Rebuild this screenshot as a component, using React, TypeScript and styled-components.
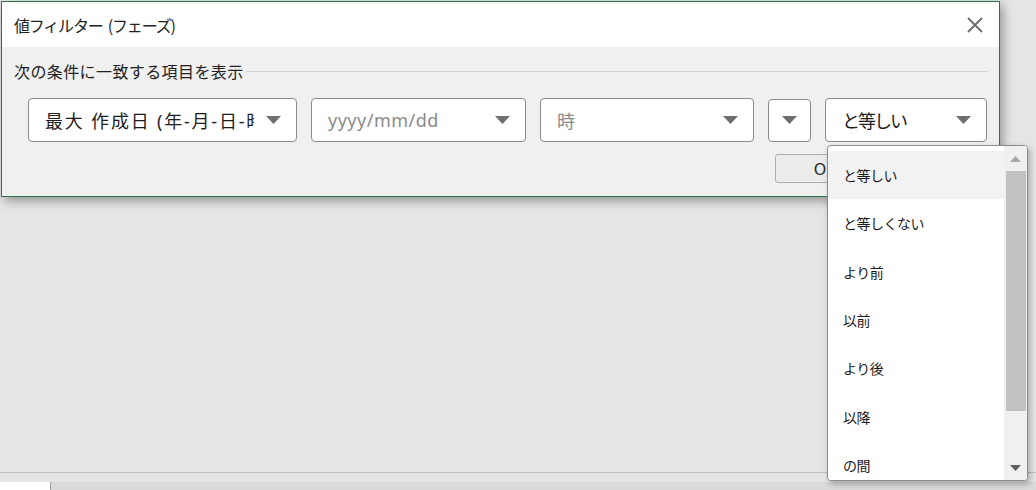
import React from "react";
import styled, { createGlobalStyle } from "styled-components";

const GlobalStyle = createGlobalStyle`
  html, body { margin: 0; padding: 0; }
  body {
    background: #e5e5e5;
    font-family: "Noto Sans", "Noto Sans CJK JP", sans-serif;
  }
  * { box-sizing: border-box; }
`;

const Page = styled.div`
  width: 1036px;
  height: 490px;
  overflow: hidden;
  display: flex;
  flex-direction: column;
  background: #e5e5e5;
`;

const Dialog = styled.div`
  margin: 1px 0 0 1px;
  width: 999px;
  height: 196px;
  flex: none;
  border: 1px solid #2a7547;
  background: #f0f0f0;
  box-shadow: 3px 4px 10px rgba(0, 0, 0, 0.35);
  display: flex;
  flex-direction: column;
  position: relative;
  z-index: 2;
`;

const TitleBar = styled.div`
  height: 45px;
  flex: none;
  background: #ffffff;
  display: flex;
  align-items: center;
  justify-content: space-between;
  padding: 0 14px 0 12px;
`;

const Title = styled.span`
  font-family: "Noto Sans CJK JP", sans-serif;
  font-size: 16px;
  letter-spacing: -1.2px;
  word-spacing: 3px;
  color: #222;
`;

const CloseButton = styled.button`
  width: 20px;
  height: 20px;
  padding: 0;
  border: none;
  background: none;
  display: flex;
  align-items: center;
  justify-content: center;
`;

const Body = styled.div`
  flex: 1;
  padding: 14px 11px 0 12px;
  display: flex;
  flex-direction: column;
`;

const Legend = styled.div`
  height: 20px;
  display: flex;
  align-items: center;
  gap: 2px;
  font-family: "Noto Sans CJK JP", sans-serif;
  font-size: 16px;
  letter-spacing: 0.4px;
  color: #222;
`;

const LegendRule = styled.div`
  flex: 1;
  height: 1px;
  background: #d3d3d3;
`;

const Controls = styled.div`
  margin-top: 17px;
  padding-left: 14px;
  display: flex;
  align-items: center;
  gap: 14px;
`;

const SelectBox = styled.div<{ $w: number; $compact?: boolean }>`
  position: relative;
  width: ${(p) => p.$w}px;
  height: ${(p) => (p.$compact ? 43 : 44)}px;
  flex: none;
  border: 1px solid #8a8a8a;
  border-radius: 4px;
  background: #ffffff;
  display: flex;
  align-items: center;
  justify-content: ${(p) => (p.$compact ? "center" : "space-between")};
  padding: ${(p) => (p.$compact ? "0" : "0 15px 0 16px")};
  gap: 12px;
`;

const SelectText = styled.span<{ $muted?: boolean; $tracking?: number }>`
  flex: 1;
  min-width: 0;
  overflow: hidden;
  white-space: nowrap;
  font-size: 18px;
  letter-spacing: ${(p) => p.$tracking ?? 0}px;
  color: ${(p) => (p.$muted ? "#8a8a8a" : "#1e1e1e")};
`;

const Buttons = styled.div`
  margin-top: 12px;
  padding-right: 3px;
  display: flex;
  justify-content: flex-end;
  gap: 10px;
`;

const PushButton = styled.button`
  width: 100px;
  height: 29px;
  border: 1px solid #adadad;
  border-radius: 3px;
  background: #ececec;
  font-family: "Noto Sans", "Noto Sans CJK JP", sans-serif;
  font-size: 16px;
  color: #222;
  padding: 0;
`;

const Dropdown = styled.div`
  position: absolute;
  top: calc(100% + 4px);
  left: 1px;
  width: 201px;
  height: 336px;
  border: 1px solid #8c8c8c;
  border-radius: 4px;
  background: #ffffff;
  box-shadow: 2px 3px 6px rgba(0, 0, 0, 0.28);
  display: flex;
  overflow: hidden;
`;

const OptionList = styled.div`
  flex: 1;
  padding-top: 5px;
  overflow: hidden;
`;

const Option = styled.div<{ $active?: boolean }>`
  height: 48.33px;
  display: flex;
  align-items: center;
  padding-left: 15px;
  font-family: "Noto Sans CJK JP", sans-serif;
  font-size: 14px;
  letter-spacing: -0.5px;
  color: #1c1c1c;
  background: ${(p) => (p.$active ? "#f2f2f2" : "#ffffff")};
`;

const Scrollbar = styled.div`
  width: 23px;
  flex: none;
  background: #f0f0f0;
  display: flex;
  flex-direction: column;
`;

const ScrollArrow = styled.div`
  height: 25px;
  flex: none;
  display: flex;
  align-items: center;
  justify-content: center;
`;

const Thumb = styled.div`
  height: 240px;
  flex: none;
  margin: 0 1px 0 2px;
  background: #c1c1c1;
`;

const Track = styled.div`
  flex: 1;
`;

const Spacer = styled.div`
  flex: 1;
`;

const BottomRule = styled.div`
  height: 1px;
  flex: none;
  background: #bdbdbd;
`;

const TabStrip = styled.div`
  margin-top: 9px;
  height: 8px;
  flex: none;
  background: #dadada;
  display: flex;
`;

const SheetTab = styled.div`
  width: 51px;
  background: #ffffff;
  border-right: 1px solid #a3a3a3;
`;

const Caret = () => (
  <svg width="15" height="8" viewBox="0 0 15 8">
    <polygon points="0,0 15,0 7.5,8" fill="#6e6e6e" />
  </svg>
);

const SmallTri = ({ up, color }: { up?: boolean; color: string }) => (
  <svg width="11" height="6" viewBox="0 0 11 6">
    <polygon points={up ? "0,6 11,6 5.5,0" : "0,0 11,0 5.5,6"} fill={color} />
  </svg>
);

const options = ["と等しい", "と等しくない", "より前", "以前", "より後", "以降", "の間"];

export default function App() {
  return (
    <>
      <GlobalStyle />
      <Page>
        <Dialog>
          <TitleBar>
            <Title>値フィルター (フェーズ)</Title>
            <CloseButton aria-label="閉じる">
              <svg width="16" height="16" viewBox="0 0 16 16">
                <path d="M1 1 L15 15 M15 1 L1 15" stroke="#6b6b6b" strokeWidth="1.8" />
              </svg>
            </CloseButton>
          </TitleBar>
          <Body>
            <Legend>
              <span>次の条件に一致する項目を表示</span>
              <LegendRule />
            </Legend>
            <Controls>
              <SelectBox $w={269}>
                <SelectText $tracking={1.8}>最大 作成日 (年-月-日-時)</SelectText>
                <Caret />
              </SelectBox>
              <SelectBox $w={215}>
                <SelectText $muted $tracking={0.5}>yyyy/mm/dd</SelectText>
                <Caret />
              </SelectBox>
              <SelectBox $w={214}>
                <SelectText $muted>時</SelectText>
                <Caret />
              </SelectBox>
              <SelectBox $w={43} $compact>
                <Caret />
              </SelectBox>
              <SelectBox $w={162}>
                <SelectText $tracking={-2}>と等しい</SelectText>
                <Caret />
                <Dropdown>
                  <OptionList>
                    {options.map((o, i) => (
                      <Option key={o} $active={i === 0}>
                        {o}
                      </Option>
                    ))}
                  </OptionList>
                  <Scrollbar>
                    <ScrollArrow>
                      <SmallTri up color="#a6a6a6" />
                    </ScrollArrow>
                    <Thumb />
                    <Track />
                    <ScrollArrow>
                      <SmallTri color="#606060" />
                    </ScrollArrow>
                  </Scrollbar>
                </Dropdown>
              </SelectBox>
            </Controls>
            <Buttons>
              <PushButton>OK</PushButton>
              <PushButton>キャンセル</PushButton>
            </Buttons>
          </Body>
        </Dialog>
        <Spacer />
        <BottomRule />
        <TabStrip>
          <SheetTab />
        </TabStrip>
      </Page>
    </>
  );
}
